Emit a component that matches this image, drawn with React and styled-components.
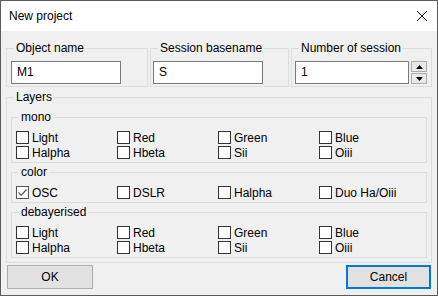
import styled, { createGlobalStyle } from 'styled-components';

const Global = createGlobalStyle`
  body {
    margin: 0;
    background: #fff;
    font-family: "Liberation Sans", Arial, sans-serif;
    font-size: 12px;
    color: #000;
  }
`;

const Window = styled.div`
  width: 438px;
  height: 296px;
  box-sizing: border-box;
  border: 1px solid #5a5a5a;
  background: #f0f0f0;
  display: flex;
  flex-direction: column;
`;

const TitleBar = styled.div`
  height: 30px;
  background: #fff;
  display: flex;
  align-items: center;
  justify-content: space-between;
  padding: 0 10px 0 8px;
  line-height: 14px;
`;

const Content = styled.div`
  padding: 10px 5px 6px 5px;
  display: flex;
  flex-direction: column;
`;

const TopRow = styled.div`
  display: flex;
  gap: 2px;
`;

const Group = styled.fieldset`
  margin: ${(p) => p.$mt || 0}px 0 0 0;
  padding: 0;
  border: 1px solid #dcdcdc;
  width: ${(p) => (p.$w ? `${p.$w}px` : 'auto')};
  box-sizing: border-box;
  min-inline-size: 0;
`;

const Legend = styled.legend`
  margin-left: 7px;
  padding: 0 2px;
  line-height: 14px;
  height: 14px;
`;

const GroupBody = styled.div`
  padding: ${(p) => p.$pad};
  display: flex;
  flex-direction: column;
  align-items: stretch;
`;

const InputRow = styled.div`
  display: flex;
  gap: 2px;
  align-items: flex-start;
`;

const TextBox = styled.div`
  width: ${(p) => p.$w}px;
  height: 23px;
  box-sizing: border-box;
  border: 1px solid #7a7a7a;
  background: #fff;
  padding: 0 5px;
  line-height: 21px;
`;

const Spinner = styled.div`
  display: flex;
  flex-direction: column;
  gap: 1px;
  width: 16px;
`;

const SpinButton = styled.div`
  height: ${(p) => p.$h}px;
  box-sizing: border-box;
  border: 1px solid #adadad;
  background: #e9e9e9;
  display: flex;
  align-items: center;
  justify-content: center;
`;

const CheckGrid = styled.div`
  display: grid;
  grid-template-columns: repeat(4, 101px);
  grid-auto-rows: 15px;
`;

const CheckItem = styled.label`
  display: flex;
  align-items: center;
  white-space: nowrap;
`;

const Box = styled.span`
  width: 13px;
  height: 13px;
  box-sizing: border-box;
  border: 1px solid ${(p) => (p.$checked ? '#555' : '#333')};
  background: #fff;
  margin-right: 3px;
  display: flex;
  align-items: center;
  justify-content: center;
  flex: none;
`;

const ButtonRow = styled.div`
  display: flex;
  justify-content: space-between;
  margin-top: 2px;
  padding: 0 1px;
`;

const Button = styled.div`
  width: ${(p) => p.$w}px;
  height: 24px;
  box-sizing: border-box;
  border: ${(p) => (p.$default ? '2px solid #0078d7' : '1px solid #adadad')};
  background: #e1e1e1;
  display: flex;
  align-items: center;
  justify-content: center;
`;

function CheckBox({ label, checked }) {
  return (
    <CheckItem>
      <Box $checked={checked}>
        {checked && (
          <svg width="11" height="11" viewBox="0 0 11 11">
            <path d="M1.5 5.5 L4.2 8.2 L9.5 2.5" fill="none" stroke="#555" strokeWidth="1.2" />
          </svg>
        )}
      </Box>
      {label}
    </CheckItem>
  );
}

function Layer({ title, items, mt }) {
  return (
    <Group $mt={mt}>
      <Legend>{title}</Legend>
      <GroupBody $pad="6px 4px 2px 4px">
        <CheckGrid>
          {items.map((it) => (
            <CheckBox key={it.label} label={it.label} checked={it.checked} />
          ))}
        </CheckGrid>
      </GroupBody>
    </Group>
  );
}

const filters = ['Light', 'Red', 'Green', 'Blue', 'Halpha', 'Hbeta', 'Sii', 'Oiii'].map((label) => ({ label }));
const colorItems = [
  { label: 'OSC', checked: true },
  { label: 'DSLR' },
  { label: 'Halpha' },
  { label: 'Duo Ha/Oiii' },
];

export default function App() {
  return (
    <>
      <Global />
      <Window>
        <TitleBar>
          <span>New project</span>
          <svg width="10" height="10" viewBox="0 0 10 10">
            <path d="M0 0 L10 10 M10 0 L0 10" stroke="#111" strokeWidth="1" />
          </svg>
        </TitleBar>
        <Content>
          <TopRow>
            <Group $w={142}>
              <Legend>Object name</Legend>
              <GroupBody $pad="6px 4px 2px 4px">
                <TextBox $w={110}>M1</TextBox>
              </GroupBody>
            </Group>
            <Group $w={139}>
              <Legend>Session basename</Legend>
              <GroupBody $pad="6px 4px 2px 2px">
                <TextBox $w={110}>S</TextBox>
              </GroupBody>
            </Group>
            <Group $w={141}>
              <Legend>Number of session</Legend>
              <GroupBody $pad="6px 4px 2px 3px">
                <InputRow>
                  <TextBox $w={114}>1</TextBox>
                  <Spinner>
                    <SpinButton $h={11}>
                      <svg width="7" height="4" viewBox="0 0 7 4">
                        <path d="M3.5 0 L7 4 L0 4 Z" fill="#000" />
                      </svg>
                    </SpinButton>
                    <SpinButton $h={11}>
                      <svg width="7" height="4" viewBox="0 0 7 4">
                        <path d="M0 0 L7 0 L3.5 4 Z" fill="#000" />
                      </svg>
                    </SpinButton>
                  </Spinner>
                </InputRow>
              </GroupBody>
            </Group>
          </TopRow>
          <Group $mt={3}>
            <Legend>Layers</Legend>
            <GroupBody $pad="6px 4px 4px 4px">
              <Layer title="mono" items={filters} />
              <Layer title="color" items={colorItems} mt={2} />
              <Layer title="debayerised" items={filters} mt={2} />
            </GroupBody>
          </Group>
          <ButtonRow>
            <Button $w={86}>OK</Button>
            <Button $w={85} $default>Cancel</Button>
          </ButtonRow>
        </Content>
      </Window>
    </>
  );
}
